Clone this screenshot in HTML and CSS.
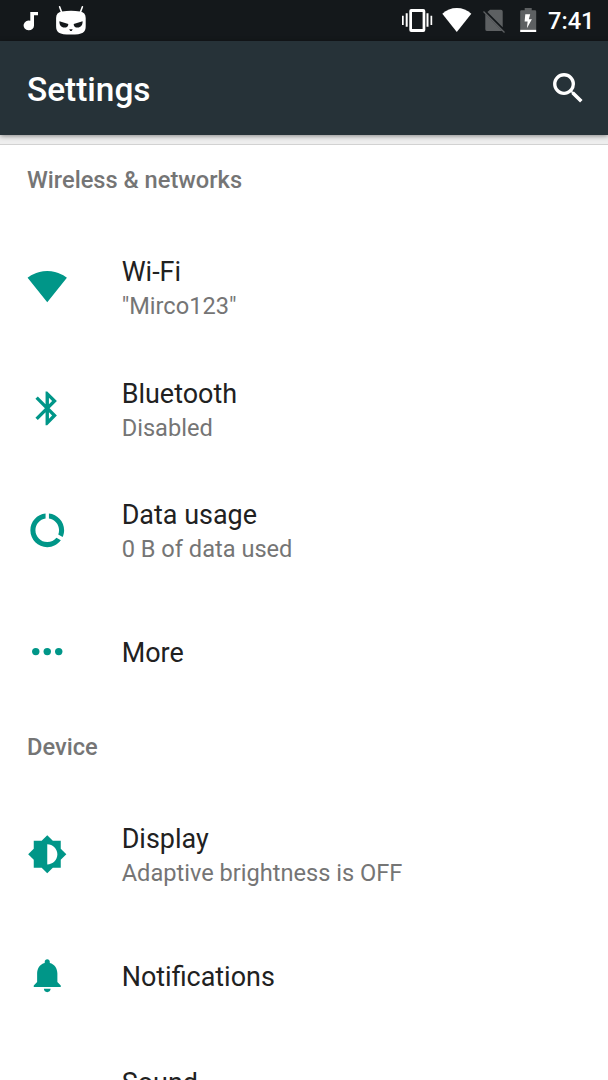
FILE: index.html
```html
<!DOCTYPE html>
<html lang="en">
<head>
<meta charset="utf-8">
<title>Settings</title>
<link rel="stylesheet" href="styles.css">
</head>
<body>
<div class="screen">
  <div class="status-bar">
    <svg class="note" viewBox="23 11 16 20" width="16" height="20"><path d="M30.3 12H38v3.3h-4V25.200a5.200 4.900 0 1 1-3.700-4.500z"/></svg>
    <svg class="mascot" viewBox="55 5 32 31" width="32" height="31">
      <path d="M59.600 6.700l2.200 6M82.400 6.700l-2.200 6" fill="none" stroke="#fff" stroke-width="1.600" stroke-linecap="round"/>
      <path d="M62 11.500q9-1.500 18 0 5.700.8 5.700 6.500v8c0 6.500-2.700 8.600-14.800 8.600S56.100 32.500 56.100 26v-8q0-5.700 5.900-6.500z"/>
      <path class="hole" d="M59.400 21.300l8.900 2.600c.2 2.300-1.600 3.700-3.900 3.700-3.200 0-5.200-2.500-5-6.300zM82.600 21.300l-8.900 2.600c-.2 2.300 1.600 3.700 3.900 3.700 3.200 0 5.200-2.500 5-6.300zM69.200 29.300h3.500l-1 1.600h-1.500z"/>
    </svg>
    <div class="indicators">
      <svg viewBox="402 5 31 30" width="31" height="30"><path fill-rule="evenodd" d="M411.300 9h12a2 2 0 0 1 2 2v19a2 2 0 0 1-2 2h-12a2 2 0 0 1-2-2V11a2 2 0 0 1 2-2zm.7 3v17h10.600V12zM402 15.700h1.700V25H402zM405.700 13.300h2v13.400h-2zM426.500 13.300h2v13.400h-2zM430.500 15.700h1.700V25h-1.700z"/></svg>
      <svg class="net" viewBox="442 5 30 30" width="30" height="30"><path d="M456.800 32L442.300 13.800Q448.500 8 456.800 8t14.500 5.800z"/></svg>
      <svg class="sim" viewBox="482 5 24 30" width="24" height="30"><path class="dim" d="M490 9.700h11a1.700 1.700 0 0 1 1.700 1.700V27.200L487.400 11.900zM485.300 13.900l17 17.200h-15.100a1.900 1.900 0 0 1-1.900-1.900z"/><path d="M483.500 11.500l21 21" fill="none" stroke="#5d6062" stroke-width="1.200"/></svg>
      <svg class="battery" viewBox="519 5 18 30" width="18" height="30"><path class="dim" d="M520.200 11.500q0-1.200 1.200-1.200h3.300V8h7v2.300h3.300q1.200 0 1.200 1.200v18.200h-16z"/><path d="M520.200 29.700h16V32h-16zM525.300 14.200h4.900l-1.400 5h3.100l-5 9 .7-6.700h-3z"/></svg>
      <span class="clock">7:41</span>
    </div>
  </div>
  <header class="app-bar">
    <h1>Settings</h1>
    <svg class="icon search" viewBox="0 0 24 24"><path d="M15.500 14h-.79l-.28-.27A6.471 6.471 0 0 0 16 9.500 6.500 6.500 0 1 0 9.500 16c1.610 0 3.090-.59 4.230-1.570l.27.28v.79l5 4.990L20.490 19l-4.990-5zm-6 0C7.010 14 5 11.990 5 9.500S7.010 5 9.500 5 14 7.010 14 9.500 11.990 14 9.500 14z"/></svg>
  </header>
  <div class="card-gap"></div>
  <main>
    <h2>Wireless &amp; networks</h2>
    <div class="row">
      <svg class="icon" viewBox="0 0 24 24"><path d="M12.010 21.490L23.640 7c-.45-.34-4.930-4-11.640-4C5.280 3 .81 6.660.36 7l11.630 14.490.02-.01z"/></svg>
      <div class="label"><div class="title">Wi-Fi</div><div class="summary">"Mirco123"</div></div>
    </div>
    <div class="row">
      <svg class="icon" viewBox="0 0 24 24"><path d="M17.710 7.710L12 2h-1v7.590L6.410 5 5 6.410 10.590 12 5 17.590 6.410 19 11 14.410V22h1l5.710-5.710-4.300-4.290 4.300-4.290zM13 5.830l1.880 1.880L13 9.590V5.830zm1.880 10.460L13 18.170v-3.760l1.880 1.880z"/></svg>
      <div class="label"><div class="title">Bluetooth</div><div class="summary">Disabled</div></div>
    </div>
    <div class="row">
      <svg class="icon" viewBox="0 0 24 24"><path d="M13 2.050v3.030c3.390.49 6 3.390 6 6.920 0 .9-.18 1.750-.48 2.540l2.600 1.530c.56-1.240.88-2.620.88-4.070 0-5.180-3.950-9.450-9-9.950zM12 19c-3.870 0-7-3.130-7-7 0-3.530 2.610-6.430 6-6.920V2.050c-5.060.5-9 4.760-9 9.950 0 5.520 4.470 10 9.990 10 3.310 0 6.240-1.610 8.060-4.090l-2.600-1.530C16.170 17.980 14.210 19 12 19z"/></svg>
      <div class="label"><div class="title">Data usage</div><div class="summary">0 B of data used</div></div>
    </div>
    <div class="row">
      <svg class="icon" viewBox="0 0 24 24"><circle cx="5.200" cy="12.200" r="2.200"/><circle cx="12" cy="12.200" r="2.200"/><circle cx="18.800" cy="12.200" r="2.200"/></svg>
      <div class="label"><div class="title">More</div></div>
    </div>
    <h2 class="device">Device</h2>
    <div class="row">
      <svg class="icon" viewBox="0 0 24 24"><path d="M20 15.310L23.310 12 20 8.690V4h-4.690L12 .69 8.690 4H4v4.690L.69 12 4 15.310V20h4.690L12 23.310 15.310 20H20v-4.690zM12 18V6c3.310 0 6 2.690 6 6s-2.690 6-6 6z"/></svg>
      <div class="label"><div class="title">Display</div><div class="summary">Adaptive brightness is OFF</div></div>
    </div>
    <div class="row">
      <svg class="icon" viewBox="0 0 24 24"><path d="M12 22c1.100 0 2-.9 2-2h-4c0 1.100.89 2 2 2zm6-6v-5c0-3.070-1.640-5.640-4.500-6.320V4c0-.83-.67-1.500-1.500-1.500s-1.500.67-1.500 1.500v.68C7.630 5.360 6 7.920 6 11v5l-2 2v1h16v-1l-2-2z"/></svg>
      <div class="label"><div class="title">Notifications</div></div>
    </div>
    <div class="row">
      <div class="icon"></div>
      <div class="label"><div class="title">Sound</div><div class="summary">&nbsp;</div></div>
    </div>
  </main>
</div>
</body>
</html>
```
FILE: styles.css
```css
* { box-sizing: border-box; }
body { margin: 0; background: #fff; font-family: Roboto, sans-serif; }
svg { display: block; flex: none; fill: #fff; }
.screen { height: 1080px; overflow: hidden; display: flex; flex-direction: column; }
.status-bar { height: 40.5px; flex: none; background: #14181b; display: flex; align-items: center; padding: 0 14.500px 0 23px; }
.note { margin-top: 1px; }
.mascot { margin-left: 16px; }
.hole { fill: #14181b; }
.dim { fill: #5d6062; }
.indicators { margin-left: auto; display: flex; align-items: center; }
.net { margin-left: 9px; }
.sim { margin-left: 10px; }
.battery { margin-left: 13px; }
.clock { width: 45.500px; margin-left: 11px; color: #fff; font-size: 23.600px; font-weight: 500; line-height: 28px; padding-top: 2px; white-space: nowrap; }
.app-bar { height: 94.500px; flex: none; background: #263238; display: flex; align-items: center; justify-content: space-between; padding: 0 20px 0 27px; box-shadow: 0 1px 5px rgba(0,0,0,.45); z-index: 1; }
h1 { margin: 5px 0 0; color: #fff; font-size: 33.400px; font-weight: 500; line-height: 40px; }
.icon { width: 40.500px; height: 40.500px; flex: none; fill: #009688; }
.search { fill: #fff; }
.card-gap { height: 10px; flex: none; background: #eee; border-bottom: 1px solid #d2d2d2; }
main { flex: none; padding-top: 1px; }
h2 { margin: 0; height: 79.800px; padding: 20px 27px 0; color: #757575; font-size: 23.650px; font-weight: 500; line-height: 28px; }
.device { height: 81px; padding-top: 21px; }
.row { height: 121.600px; display: flex; align-items: center; padding-left: 27px; }
.label { margin-left: 54.200px; padding-top: 3px; }
.title { color: #212121; font-size: 26.950px; line-height: 36px; }
.summary { color: #757575; font-size: 23.600px; line-height: 32px; }
```
